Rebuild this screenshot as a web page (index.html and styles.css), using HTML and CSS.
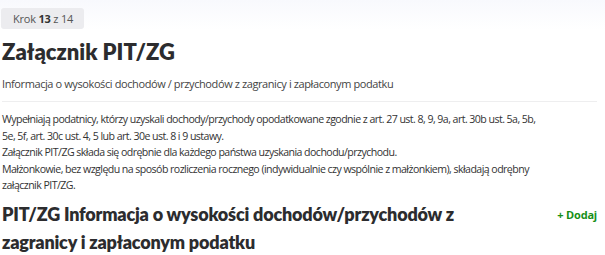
FILE: index.html
```html
<!DOCTYPE html>
<html lang="pl">
<head>
    <meta charset="UTF-8">
    <title>Załącznik PIT/ZG</title>
    <link rel="stylesheet" href="styles.css">
</head>
<body>
    <div class="page">
        <div class="step-row">
            <span class="step-badge">Krok <b>13</b> z 14</span>
        </div>

        <h1 class="page-title">Załącznik PIT/ZG</h1>
        <p class="page-subtitle">Informacja o wysokości dochodów / przychodów z zagranicy i zapłaconym podatku</p>

        <div class="intro">
            <p>Wypełniają podatnicy, którzy uzyskali dochody/przychody opodatkowane zgodnie z art. 27 ust. 8, 9, 9a, art. 30b ust. 5a, 5b, 5e, 5f, art. 30c ust. 4, 5 lub art. 30e ust. 8 i 9 ustawy.</p>
            <p>Załącznik PIT/ZG składa się odrębnie dla każdego państwa uzyskania dochodu/przychodu.</p>
            <p>Małżonkowie, bez względu na sposób rozliczenia rocznego (indywidualnie czy wspólnie z małżonkiem), składają odrębny załącznik PIT/ZG.</p>
        </div>

        <div class="section-head">
            <h2>PIT/ZG Informacja o wysokości dochodów/przychodów z zagranicy i zapłaconym podatku</h2>
            <button class="add-btn">+ Dodaj</button>
        </div>
    </div>
</body>
</html>
```

FILE: styles.css
```css
body {
    margin: 0;
    font-family: "Open Sans", Arial, sans-serif;
    color: #333;
    background: #fff;
}

/* Kontener strony */
.page {
    padding: 0 8px 0 1px;
    background: linear-gradient(#f8f9fd, #fff 30px);
}

.step-row {
    padding-top: 6px;
}

.step-badge {
    display: inline-block;
    background: #ececef;
    color: #555;
    font-size: 11px;
    letter-spacing: -0.2px;
    line-height: 21px;
    padding: 0 11px 0 12px;
    border-radius: 3px;
}

.step-badge b {
    color: #333;
}

/* Naglowki */
.page-title {
    font-family: Lato, sans-serif;
    font-size: 22px;
    font-weight: 800;
    color: #2c2c2e;
    margin: 8px 0 0 1px;
    line-height: 30px;
}

.page-subtitle {
    font-size: 11px;
    letter-spacing: -0.4px;
    color: #444;
    margin: 9px 0 0 1px;
    padding-bottom: 10px;
    border-bottom: 1px solid #eeeeef;
}

.intro {
    margin-top: 9px;
    padding-left: 1px;
    font-size: 10.6px;
    letter-spacing: -0.55px;
    line-height: 16.5px;
    color: #333;
    max-width: 545px;
}

.intro p {
    margin: 0;
}

.section-head {
    display: flex;
    align-items: flex-start;
    justify-content: space-between;
    margin-top: 6px;
    padding-left: 1px;
}

.section-head h2 {
    font-family: Lato, sans-serif;
    font-size: 18px;
    font-weight: 800;
    letter-spacing: -0.2px;
    line-height: 28px;
    color: #2c2c2e;
    margin: 0;
    max-width: 520px;
}

.add-btn {
    border: none;
    background: none;
    color: #178f17;
    font-family: "Open Sans", sans-serif;
    font-weight: bold;
    font-size: 11px;
    letter-spacing: -0.2px;
    padding: 0;
    margin-top: 7px;
    cursor: pointer;
}
```
